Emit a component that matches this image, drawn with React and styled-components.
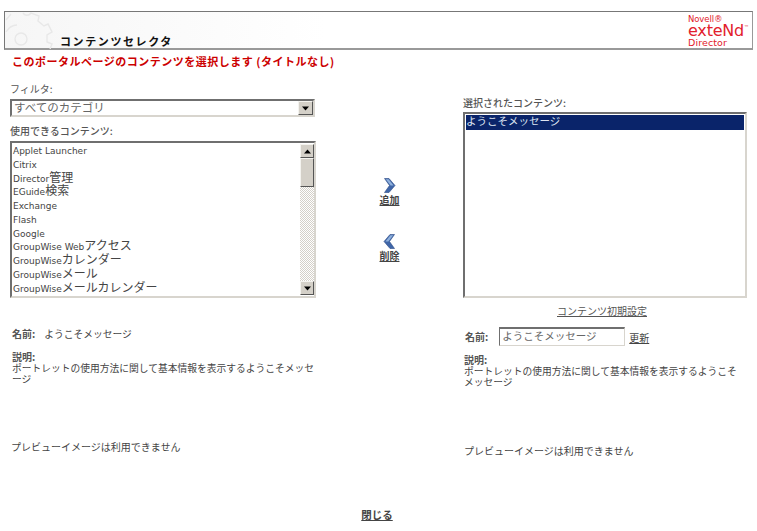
import styled, { createGlobalStyle } from 'styled-components';

const sansStack = '"DejaVu Sans", "Noto Sans CJK JP", sans-serif';
const jpStack = '"Noto Sans CJK JP", "DejaVu Sans", sans-serif';

const GlobalStyle = createGlobalStyle`
    html, body {
        margin: 0;
        padding: 0;
        background: #fff;
        font-family: ${jpStack};
        color: #444;
    }
`;

const contentItems = [
    ['Applet Launcher', ''],
    ['Citrix', ''],
    ['Director', '管理'],
    ['EGuide', '検索'],
    ['Exchange', ''],
    ['Flash', ''],
    ['Google', ''],
    ['GroupWise Web', 'アクセス'],
    ['GroupWise', 'カレンダー'],
    ['GroupWise', 'メール'],
    ['GroupWise', 'メールカレンダー'],
];

const description = 'ポートレットの使用方法に関して基本情報を表示するようこそメッセージ';

const Arrow = ({ dir }) => (
    <svg width="7" height="5" viewBox="0 0 7 5">
        <path d={dir === 'up' ? 'M3.5 0.5 L7 4.5 L0 4.5 Z' : 'M0 0.5 L7 0.5 L3.5 4.5 Z'} fill="#000" />
    </svg>
);

const Chevron = ({ flip }) => (
    <svg width="13" height="15" viewBox="0 0 13 15">
        <g transform={flip ? 'translate(13 0) scale(-1 1)' : undefined}>
            <path d="M1.5 0.5 L6 0.5 L12 7.5 L6 14.5 L1.5 14.5 L6.5 7.5 Z" fill="#3f66a8" stroke="#2c4a86" strokeWidth="0.6" />
            <path d="M2.8 1.2 L5.6 1.2 L10.6 7.5 L7.6 7.5 Z" fill="#8fb0dc" />
        </g>
    </svg>
);

const GearBackdrop = () => (
    <GearSvg width="62" height="37" viewBox="0 0 62 37">
        <g fill="none" stroke="#e8e8e8" strokeWidth="1.4">
            <circle cx="16" cy="27" r="6" />
            <path d="M1 8 L6 2 M18 1 C20 4 24 4 26 1 L34 4 L33 9 L39 14 L43 12 L47 20 L42 23 L42 30 L47 32 L45 37" />
            <path d="M1 20 C4 15 8 13 12 13" />
        </g>
    </GearSvg>
);

const ScrollBar = () => (
    <Scroll>
        <ScrollButton><Arrow dir="up" /></ScrollButton>
        <ScrollThumb />
        <ScrollTrack />
        <ScrollButton><Arrow dir="down" /></ScrollButton>
    </Scroll>
);

const App = () => {
    return (
        <>
            <GlobalStyle />
            <Page>
                <Banner>
                    <GearBackdrop />
                    <BannerTitle>コンテンツセレクタ</BannerTitle>
                    <Logo>
                        <LogoNovell>Novell®</LogoNovell>
                        <LogoExtend>exteNd<LogoMark>™</LogoMark></LogoExtend>
                        <LogoDirector>Director</LogoDirector>
                    </Logo>
                </Banner>

                <Heading>このポータルページのコンテンツを選択します (タイトルなし)</Heading>

                <Columns>
                    <LeftColumn>
                        <Label>フィルタ:</Label>
                        <Select>
                            <SelectValue>すべてのカテゴリ</SelectValue>
                            <SelectButton><Arrow dir="down" /></SelectButton>
                        </Select>
                        <ListLabel>使用できるコンテンツ:</ListLabel>
                        <ListBox $height={157}>
                            <ListItems>
                                {contentItems.map(([latin, jp]) => (
                                    <ListItem key={latin + jp}>{latin}<Jp>{jp}</Jp></ListItem>
                                ))}
                            </ListItems>
                            <ScrollBar />
                        </ListBox>
                        <NameRow>
                            <Strong>名前:</Strong>
                            <NameValue>ようこそメッセージ</NameValue>
                        </NameRow>
                        <Description $top={10} $indent={2} $width={306}>
                            <Strong>説明:</Strong>
                            <DescriptionText>{description}</DescriptionText>
                        </Description>
                        <Preview $top={56} $indent={1}>プレビューイメージは利用できません</Preview>
                    </LeftColumn>

                    <MiddleColumn>
                        <MoveAction>
                            <Chevron />
                            <ActionLink>追加</ActionLink>
                        </MoveAction>
                        <MoveAction>
                            <Chevron flip />
                            <ActionLink>削除</ActionLink>
                        </MoveAction>
                    </MiddleColumn>

                    <RightColumn>
                        <SelectedLabel>選択されたコンテンツ:</SelectedLabel>
                        <ListBox $height={186}>
                            <SelectedItem>ようこそメッセージ</SelectedItem>
                        </ListBox>
                        <DefaultsLink>コンテンツ初期設定</DefaultsLink>
                        <EditRow>
                            <Strong>名前:</Strong>
                            <NameInput>ようこそメッセージ</NameInput>
                            <UpdateLink>更新</UpdateLink>
                        </EditRow>
                        <Description $top={8} $indent={1} $width={280}>
                            <Strong>説明:</Strong>
                            <DescriptionText>{description}</DescriptionText>
                        </Description>
                        <Preview $top={57} $indent={1}>プレビューイメージは利用できません</Preview>
                    </RightColumn>
                </Columns>

                <Footer>
                    <CloseLink>閉じる</CloseLink>
                </Footer>
            </Page>
        </>
    );
}

export default App;

const Page = styled.div`
    width: 757px;
    height: 531px;
    overflow: hidden;
    display: flex;
    flex-direction: column;
`;

const Banner = styled.div`
    position: relative;
    box-sizing: border-box;
    margin: 11px 4px 0;
    height: 39px;
    width: 749px;
    flex: none;
    display: flex;
    align-items: flex-end;
    justify-content: space-between;
    border: 1px solid #777;
    border-bottom-width: 2px;
    border-right-color: #999;
    border-bottom-color: #999;
    background: linear-gradient(to right, #f6f6f6 0, #fbfbfb 180px, #fff 320px);
`;

const GearSvg = styled.svg`
    position: absolute;
    left: 0;
    top: 0;
`;

const BannerTitle = styled.div`
    position: relative;
    margin-left: 55px;
    font-size: 11px;
    line-height: 13px;
    letter-spacing: 1.6px;
    font-weight: 700;
    color: #111;
`;

const Logo = styled.div`
    display: flex;
    flex-direction: column;
    align-self: flex-end;
    margin: 0 6px 1px 0;
    width: 58px;
    font-family: "DejaVu Sans", sans-serif;
    color: #e2202c;
`;

const LogoNovell = styled.div`
    font-size: 8.5px;
    line-height: 8px;
    letter-spacing: -0.1px;
`;

const LogoExtend = styled.div`
    display: flex;
    font-size: 16px;
    line-height: 15px;
    white-space: nowrap;
    letter-spacing: -0.2px;
`;

const LogoMark = styled.span`
    font-size: 5px;
    line-height: 9px;
`;

const LogoDirector = styled.div`
    font-size: 9.5px;
    line-height: 9px;
    letter-spacing: 0.1px;
`;

const Heading = styled.div`
    margin: 4px 0 0 12px;
    font-size: 11px;
    line-height: 15px;
    font-weight: 700;
    color: #cc0000;
    letter-spacing: 0.5px;
`;

const Columns = styled.div`
    display: grid;
    grid-template-columns: 306px 147px 284px;
    margin: 13px 0 0 10px;
    align-items: start;
`;

const LeftColumn = styled.div`
    display: flex;
    flex-direction: column;
`;

const MiddleColumn = styled.div`
    display: flex;
    flex-direction: column;
    align-items: center;
    gap: 27px;
    padding-top: 96px;
`;

const RightColumn = styled.div`
    display: flex;
    flex-direction: column;
`;

const Label = styled.div`
    font-size: 10px;
    line-height: 14px;
    margin-bottom: 3px;
    color: #555;
`;

const ListLabel = styled(Label)`
    margin: 6px 0 2px;
    font-weight: 500;
    line-height: 16px;
`;

const SelectedLabel = styled(ListLabel)`
    margin: 13px 0 2px;
    line-height: 15px;
`;

const sunkenBorder = `
    box-sizing: border-box;
    border: 2px solid;
    border-color: #6f6f6f #d8d5ce #d8d5ce #6f6f6f;
    background: #fff;
`;

const Select = styled.div`
    ${sunkenBorder}
    height: 18px;
    width: 305px;
    display: flex;
    align-items: center;
    justify-content: space-between;
`;

const SelectValue = styled.div`
    margin: 0 0 2px 2px;
    font-size: 11.5px;
    line-height: 14px;
    color: #666;
`;

const raisedButton = `
    box-sizing: border-box;
    background: #d4d0c8;
    border: 1px solid;
    border-color: #f4f3ef #555 #555 #f4f3ef;
`;

const SelectButton = styled.div`
    ${raisedButton}
    width: 15px;
    height: 14px;
    display: flex;
    align-items: center;
    justify-content: center;
`;

const ListBox = styled.div`
    ${sunkenBorder}
    position: relative;
    height: ${props => props.$height}px;
    padding: 0 1px;
    overflow: hidden;
`;

const ListItems = styled.div`
    display: flex;
    flex-direction: column;
    margin-top: -1px;
`;

const ListItem = styled.div`
    height: 13.75px;
    font-family: ${sansStack};
    font-size: 9px;
    line-height: 13.75px;
    color: #444;
    white-space: nowrap;
`;

const Jp = styled.span`
    font-family: ${jpStack};
    font-size: 12px;
`;

const Scroll = styled.div`
    position: absolute;
    top: 1px;
    right: 0;
    bottom: 1px;
    width: 14px;
    display: flex;
    flex-direction: column;
`;

const ScrollButton = styled.div`
    ${raisedButton}
    flex: none;
    height: 14px;
    display: flex;
    align-items: center;
    justify-content: center;
`;

const ScrollThumb = styled.div`
    ${raisedButton}
    flex: none;
    height: 29px;
`;

const ScrollTrack = styled.div`
    flex: 1;
    background: repeating-conic-gradient(#d4d0c8 0 25%, #fff 0 50%) 0 0 / 2px 2px;
`;

const SelectedItem = styled.div`
    height: 15px;
    margin-top: 1px;
    background: #0a246a;
    color: #dfe4f2;
    font-size: 10.5px;
    line-height: 12px;
`;

const MoveAction = styled.div`
    display: flex;
    flex-direction: column;
    align-items: center;
`;

const ActionLink = styled.div`
    font-size: 10px;
    line-height: 14px;
    font-weight: 700;
    color: #444;
    text-decoration: underline;
`;

const DefaultsLink = styled.div`
    margin-top: 6px;
    padding-right: 6px;
    text-align: center;
    font-size: 10px;
    line-height: 14px;
    color: #555;
    text-decoration: underline;
`;

const NameRow = styled.div`
    display: flex;
    align-items: center;
    gap: 9px;
    margin: 29px 0 0 2px;
    font-size: 9.75px;
    line-height: 14px;
`;

const Strong = styled.div`
    font-weight: 700;
    font-size: 10px;
    line-height: 12px;
    color: #555;
`;

const NameValue = styled.div`
    color: #444;
`;

const EditRow = styled.div`
    display: flex;
    align-items: center;
    margin: 9px 0 0 2px;
    height: 19px;
`;

const NameInput = styled.div`
    ${sunkenBorder}
    margin-left: 11px;
    width: 126px;
    height: 19px;
    font-size: 10.5px;
    line-height: 14px;
    color: #666;
    border-width: 1px;
    border-top-width: 2px;
    padding-left: 2px;
`;

const UpdateLink = styled.div`
    margin: 2px 0 0 4px;
    font-size: 10px;
    line-height: 14px;
    text-decoration: underline;
    color: #444;
`;

const Description = styled.div`
    margin: ${props => props.$top}px 0 0 ${props => props.$indent}px;
    width: ${props => props.$width}px;
`;

const DescriptionText = styled.div`
    font-size: 9.75px;
    line-height: 10.5px;
    color: #444;
`;

const Preview = styled.div`
    margin: ${props => props.$top}px 0 0 ${props => props.$indent}px;
    font-size: 10px;
    line-height: 14px;
    color: #444;
`;

const Footer = styled.div`
    margin-top: auto;
    padding-bottom: 9px;
    display: flex;
    justify-content: center;
`;

const CloseLink = styled.div`
    margin-left: -3px;
    font-size: 10.5px;
    line-height: 14px;
    font-weight: 700;
    color: #444;
    text-decoration: underline;
`;
